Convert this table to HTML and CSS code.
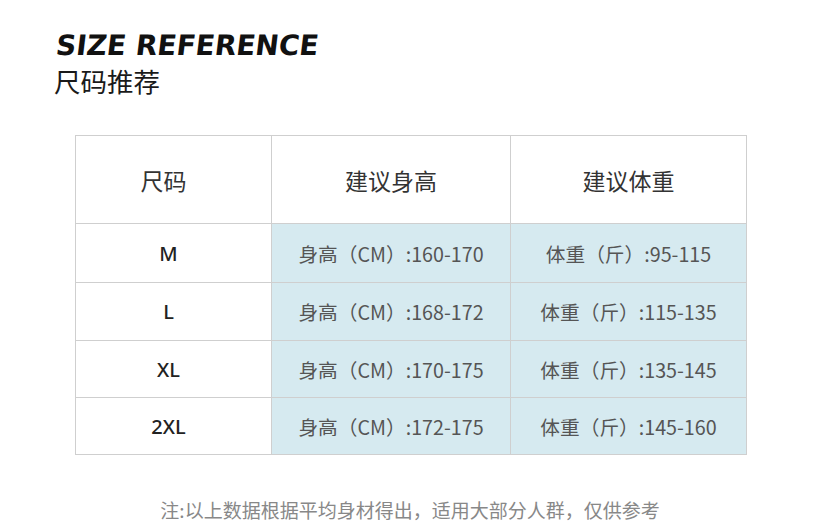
FILE: index.html
```html
<!DOCTYPE html>
<html lang="zh">
<head>
<meta charset="utf-8">
<link rel="stylesheet" href="styles.css">
</head>
<body>
<div class="page">
  <header class="head">
    <h1 class="title">SIZE REFERENCE</h1>
    <h2 class="subtitle">尺码推荐</h2>
  </header>
  <table class="sizes">
    <thead>
      <tr>
        <th class="c1">尺码</th>
        <th class="c2">建议身高</th>
        <th class="c3">建议体重</th>
      </tr>
    </thead>
    <tbody>
      <tr class="r1"><td class="size">M</td><td class="val">身高（CM）:160-170</td><td class="val">体重（斤）:95-115</td></tr>
      <tr class="r2"><td class="size">L</td><td class="val">身高（CM）:168-172</td><td class="val">体重（斤）:115-135</td></tr>
      <tr class="r3"><td class="size">XL</td><td class="val">身高（CM）:170-175</td><td class="val">体重（斤）:135-145</td></tr>
      <tr class="r4"><td class="size">2XL</td><td class="val">身高（CM）:172-175</td><td class="val">体重（斤）:145-160</td></tr>
    </tbody>
  </table>
  <p class="note">注:以上数据根据平均身材得出，适用大部分人群，仅供参考</p>
</div>
</body>
</html>
```

FILE: styles.css
```css
html, body {
  margin: 0;
  padding: 0;
  background: #ffffff;
}
.page {
  width: 830px;
  height: 526px;
  box-sizing: border-box;
  padding: 29px 0 0 0;
  font-family: "Noto Sans CJK SC", "Noto Sans", sans-serif;
  color: #333;
}
.head {
  padding-left: 54px;
}
.title {
  margin: 0;
  font-family: "DejaVu Sans", sans-serif;
  font-weight: 700;
  font-size: 28px;
  line-height: 34px;
  color: #111;
  transform: skewX(-7deg);
  transform-origin: left bottom;
  width: max-content;
}
.subtitle {
  margin: 0;
  font-weight: 400;
  font-size: 26.5px;
  line-height: 36px;
  color: #1a1a1a;
}
.sizes {
  margin: 36px 0 0 75px;
  border-collapse: collapse;
  table-layout: fixed;
  width: 670px;
}
.sizes th, .sizes td {
  border: 1px solid #cfcfcf;
  padding: 0;
  text-align: center;
}
.sizes th {
  height: 87px;
  font-weight: 400;
  font-size: 23px;
  color: #333;
}
.c1 { width: 196px; padding-right: 20px !important; box-sizing: border-box; }
.c2 { width: 238px; }
.c3 { width: 235px; }
.sizes td {
  font-size: 19.7px;
}
.r1 td { height: 58px; }
.r2 td { height: 57px; }
.r3 td { height: 56px; }
.r4 td { height: 56px; }
.sizes td.size {
  font-family: "Noto Sans", sans-serif;
  font-weight: 500;
  font-size: 20px;
  color: #222;
  background: #ffffff;
  padding-right: 10px;
}
.val {
  background: #d6eaf0;
  color: #555;
  border-color: #bfcdd2;
}
.note {
  margin: 42px 0 0 0;
  padding-right: 10px;
  text-align: center;
  font-size: 19px;
  line-height: 26px;
  color: #888;
}
```
